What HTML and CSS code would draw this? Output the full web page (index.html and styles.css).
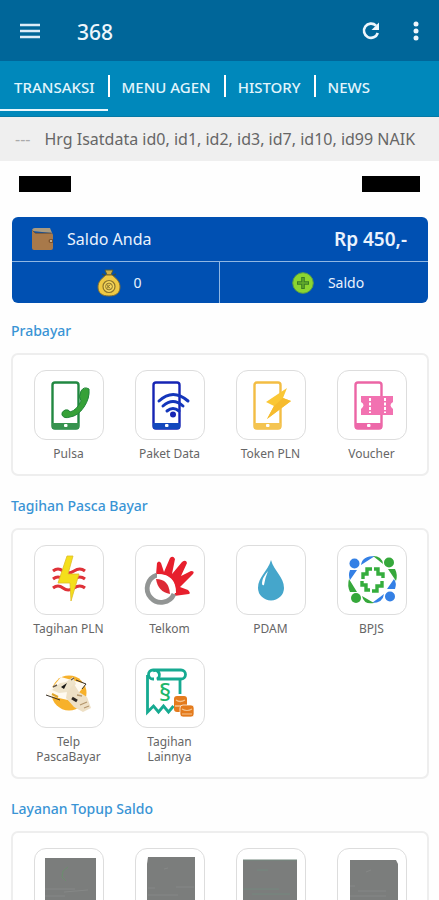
FILE: index.html
```html
<!DOCTYPE html>
<html lang="id">
<head>
  <title>368</title>
  <meta charset="UTF-8">
  <meta name="viewport" content="width=device-width, initial-scale=1.0">
  <link rel="stylesheet" href="styles.css">
</head>
<body>
  <header class="header">
    <button class="icon-btn" type="button" aria-label="Menu">
      <svg width="22" height="16" viewBox="0 0 22 16"><path d="M1 2h20M1 8h20M1 14h20" stroke="#dcecf8" stroke-width="2.4"/></svg>
    </button>
    <h1>368</h1>
    <button class="icon-btn" type="button" aria-label="Refresh">
      <svg width="20" height="20" viewBox="0 0 20 20"><path d="M15 4.600A7.100 7.100 0 1 0 16.800 12" fill="none" stroke="#eef6fc" stroke-width="2.6"/><path d="M18 1.500v7.500h-7.500z" fill="#eef6fc"/></svg>
    </button>
    <button class="icon-btn more" type="button" aria-label="More">
      <svg width="6" height="20" viewBox="0 0 6 20" fill="#eef6fc"><circle cx="3" cy="3" r="2.5"/><circle cx="3" cy="10" r="2.5"/><circle cx="3" cy="17" r="2.5"/></svg>
    </button>
  </header>
  <nav class="tabs">
    <a class="tab active" href="#transaksi">TRANSAKSI</a>
    <a class="tab" href="#menu-agen">MENU AGEN</a>
    <a class="tab" href="#history">HISTORY</a>
    <a class="tab" href="#news">NEWS</a>
  </nav>
  <div class="ticker"><span class="dashes">---</span><span>Hrg Isatdata id0, id1, id2, id3, id7, id10, id99 NAIK</span></div>
  <main class="content">
    <div class="account">
      <span class="bar"></span>
      <span class="bar bar-wide"></span>
    </div>
    <section class="balance">
      <div class="balance-top">
        <svg width="24" height="24" viewBox="0 0 24 24"><path d="M1 4q0-3 3-3h15l2 5z" fill="#a99a80"/><path d="M1 3l3 3h16q2 0 2 2v13q0 2-2 2H3q-2 0-2-2z" fill="#a8794a"/><path d="M1.500 3.500l3 2.700h16" fill="none" stroke="#69513a"/><path d="M22 12h-2.500q-2 0-2 2t2 2H22z" fill="#805630"/><circle cx="20" cy="14" r="1" fill="#ddcaa8"/></svg>
        <span class="balance-label">Saldo Anda</span>
        <strong class="amount">Rp 450,-</strong>
      </div>
      <div class="balance-actions">
        <button type="button" class="points">
          <svg width="24" height="28" viewBox="0 0 24 28"><path d="M8 1h8l-2 5h-4z" fill="#d0b047" stroke="#54613a"/><path d="M5 5l4 2h6l4-2" fill="none" stroke="#384f43" stroke-width="1.6"/><path d="M9 6h6c5 4 8 7 8 12 0 6-4 9-11 9S1 24 1 18C1 13 4 10 9 6z" fill="#efc944" stroke="#826e31"/><circle cx="12" cy="17.5" r="6" fill="#f6d75c" stroke="#8b742c" stroke-width="1.2"/><circle cx="12" cy="17.5" r="3.4" fill="none" stroke="#8b742c"/><path d="M10.800 15.500v4M13.400 15.600l-2.400 2 2.400 1.800" stroke="#8b742c" fill="none"/></svg>
          <span>0</span>
        </button>
        <button type="button" class="topup">
          <svg width="22" height="22" viewBox="0 0 22 22"><circle cx="11" cy="11" r="10.3" fill="#8bd530" stroke="#5b9f43"/><path d="M11 5v12M5 11h12" stroke="#397b25" stroke-width="3.6"/><path d="M11 6v10M6 11h10" stroke="#63ad2b" stroke-width="1.4"/></svg>
          <span>Saldo</span>
        </button>
      </div>
    </section>

    <h2>Prabayar</h2>
    <section class="card">
      <a class="item" href="#pulsa">
        <span class="tile"><svg viewBox="0 0 68 68">
          <rect x="17.5" y="11.5" width="26" height="46" rx="2.5" fill="#fff" stroke="#218841" stroke-width="2.4"/><path d="M17 52h27v4q0 2-2 2H19q-2 0-2-2z" fill="#37934f"/><rect x="29" y="53" width="3.5" height="3" rx="1" fill="#fff"/>
          <path d="M46 20q3-5 8-2 1 9-5 18T35 46q-6 2-8-2-1-3 3-5 4-1 5 2 7-2 11-11-3-4 0-10z" fill="#36a137" stroke="#218539"/>
        </svg></span>
        <span class="label">Pulsa</span>
      </a>
      <a class="item" href="#paket-data">
        <span class="tile"><svg viewBox="0 0 68 68">
          <rect x="17.5" y="11.5" width="26" height="46" rx="2.5" fill="#fff" stroke="#1624b4" stroke-width="2.4"/><path d="M17 52h27v4q0 2-2 2H19q-2 0-2-2z" fill="#1448bd"/><rect x="29" y="53" width="3.5" height="3" rx="1" fill="#fff"/>
          <g fill="none" stroke="#1436bb" stroke-width="3" stroke-linecap="round"><path d="M23 30q14-13 29 0M27 35q10-9 20 0M31 40q6-5 12 0"/></g><circle cx="37" cy="43.5" r="3" fill="#1624b4"/>
        </svg></span>
        <span class="label">Paket Data</span>
      </a>
      <a class="item" href="#token-pln">
        <span class="tile"><svg viewBox="0 0 68 68">
          <rect x="17.5" y="11.5" width="26" height="46" rx="2.5" fill="#fff" stroke="#f3bd43" stroke-width="2.4"/><path d="M17 52h27v4q0 2-2 2H19q-2 0-2-2z" fill="#f4c451"/><rect x="29" y="53" width="3.5" height="3" rx="1" fill="#fff"/>
          <path d="M50 17L29 31l8 4-7 13 24-18-8-3z" fill="#fac735"/><path d="M37 35l-7 13 24-18-8-3z" fill="#f6bb2e"/>
        </svg></span>
        <span class="label">Token PLN</span>
      </a>
      <a class="item" href="#voucher">
        <span class="tile"><svg viewBox="0 0 68 68">
          <rect x="17.5" y="11.5" width="26" height="46" rx="2.5" fill="#fff" stroke="#ec65a5" stroke-width="2.4"/><path d="M17 52h27v4q0 2-2 2H19q-2 0-2-2z" fill="#ed68a9"/><rect x="29" y="53" width="3.5" height="3" rx="1" fill="#fff"/>
          <path d="M23 25h32v6q-5 3 0 7v6H23v-6q5-4 0-7z" fill="#f272b1"/><path d="M32 27v15M47 27v15" stroke="#fff" stroke-width="2" stroke-dasharray="3 1.5"/>
        </svg></span>
        <span class="label">Voucher</span>
      </a>
    </section>

    <h2>Tagihan Pasca Bayar</h2>
    <section class="card">
      <a class="item" href="#tagihan-pln">
        <span class="tile"><svg viewBox="0 0 68 68">
          <g fill="none" stroke="#df3238" stroke-width="3"><path d="M18 25q5-4 10 0t11 0 11 0M18 33q5-4 10 0t11 0 11 0M18 42q5-4 10 0t11 0 11 0"/></g>
          <path d="M32 10h6l-5 18h11l-8 27-1-18H23z" fill="#f4df1b" stroke="#e0bd27" stroke-width=".8"/>
        </svg></span>
        <span class="label">Tagihan PLN</span>
      </a>
      <a class="item" href="#telkom">
        <span class="tile"><svg viewBox="0 0 68 68">
          <path d="M20 29l1-12q2-3 4 0l3 9 6-14q3-3 5 1l-3 15 10-12q4-3 5 1l-6 13 10-5q4 0 2 3L44 41l8 3q3 3 1 4l-15 2-6-12z" fill="#e71f2d"/>
          <circle cx="25" cy="43" r="14.5" fill="#fff"/>
          <path d="M21 29a14 14 0 1 0 17 19" fill="none" stroke="#929594" stroke-width="4.8"/>
          <path d="M21 30q16 0 17 17" fill="none" stroke="#fff" stroke-width="4.2"/>
          <path d="M20 33q13 0 14 15-12-2-14-15z" fill="#dd2935"/>
        </svg></span>
        <span class="label">Telkom</span>
      </a>
      <a class="item" href="#pdam">
        <span class="tile"><svg viewBox="0 0 68 68">
          <path d="M34 14C31 25 21 31 21 42a13 12.500 0 0 0 26 0C47 31 37 25 34 14z" fill="#45a6cb"/><path d="M31 25q-6 7-6 12 0 3 2 2 1-7 4-14z" fill="#fff"/>
        </svg></span>
        <span class="label">PDAM</span>
      </a>
      <a class="item" href="#bpjs">
        <span class="tile"><svg viewBox="0 0 68 68">
          <g fill="#3480e5"><circle cx="16.5" cy="17.5" r="5"/><path d="M23 19q1-9 14-9zM12 24h7l-7 10q-2-5 0-10zM34 57l12-9q-1 9-12 9zM57 43h-8l7-10q3 4 1 10z"/><circle cx="52" cy="50.500" r="5"/></g>
          <g fill="#36a83b"><circle cx="51" cy="16.5" r="5"/><path d="M35 10q9 0 10 8zM57 23h-7l8 12q2-6-1-12zM11 33l8 13h-7q-3-6-1-13zM24 50l12 7q-10 2-12-7z"/><circle cx="18" cy="52" r="5"/></g>
          <g fill="none" stroke="#35ad3d" stroke-width="3.4"><path d="M25 33v-5h4v-5h5M36 23h4v5h5v4M44 35v5h-5v5h-5M32 44h-4v-5h-4v-4"/></g>
        </svg></span>
        <span class="label">BPJS</span>
      </a>
      <a class="item" href="#telp-pascabayar">
        <span class="tile"><svg viewBox="0 0 68 68">
          <circle cx="34" cy="34" r="17.5" fill="#f7b12b"/>
          <path d="M11 36l15-18 25 7-14 17z" fill="#fffaf0"/><path d="M11 36l14 5M41 21l10 4-4 5" fill="none" stroke="#393027"/>
          <path d="M17 31l8-7 6-1 7-5 3 7-8 8-9 1z" fill="#efe4cb"/><path d="M26 28l6-4-3 6z" fill="#171614"/><path d="M18 28l4-2M36 21l3-2" stroke="#685b4b" stroke-width="1.5"/>
          <path d="M32 33l7-8 5 8 8 5 4 11-8 4-9-5-8-9z" fill="#eee0c5"/><path d="M37 39l5 3" stroke="#302923" stroke-width="3"/><path d="M42 36l5 1M45 46l7-3M49 49l5-2" stroke="#b4966c" stroke-width="1.3"/>
          <path d="M17 35l6 3" stroke="#e0a52a" stroke-width="2"/>
        </svg></span>
        <span class="label">Telp PascaBayar</span>
      </a>
      <a class="item" href="#tagihan-lainnya">
        <span class="tile"><svg viewBox="0 0 68 68">
          <path d="M18 20h-1a4.500 4.500 0 0 1 0-9h28a4.500 4.500 0 0 1 0 9H21a4 4 0 0 0-4-8" fill="none" stroke="#16aa91" stroke-width="2.8"/>
          <path d="M11.500 16v37l6-6 5 6 5-6 5 6 5-6" fill="none" stroke="#16aa91" stroke-width="2.8"/><path d="M44 20v15" stroke="#16aa91" stroke-width="2.8"/>
          <text x="29" y="42" text-anchor="middle" class="section-mark">§</text>
          <rect x="38" y="37" width="13" height="16" rx="3" fill="#e47b1d"/><path d="M40 41q4 3 9 0M39 47h9" fill="none" stroke="#f5c48d" stroke-width="1.3"/>
          <rect x="44" y="46" width="14" height="12" rx="3" fill="#e47b1d" stroke="#fff" stroke-width=".7"/><path d="M46 50q5 3 10 0M46 55h10" fill="none" stroke="#f5c48d" stroke-width="1.2"/>
        </svg></span>
        <span class="label">Tagihan Lainnya</span>
      </a>
    </section>

    <h2>Layanan Topup Saldo</h2>
    <section class="card">
      <a class="item" href="#topup-1" aria-label="Topup 1"><span class="tile"><svg viewBox="0 0 68 68"><path d="M10 9h51v50H10z" fill="#7b7d7c"/><path d="M33 18l-5 4-1 6 4 4" fill="none" stroke="#6c8d6e"/><path d="M10 40h30M29 43l24-2M10 47h20" stroke="#868887"/></svg></span></a>
      <a class="item" href="#topup-2" aria-label="Topup 2"><span class="tile"><svg viewBox="0 0 68 68"><path d="M12 8h47v51H11V15z" fill="#7b7d7c"/><path d="M28 20l4-1M12 39h7M40 38h18M12 46h30" stroke="#868887"/></svg></span></a>
      <a class="item" href="#topup-3" aria-label="Topup 3"><span class="tile"><svg viewBox="0 0 68 68"><path d="M6 11h54v48H6z" fill="#7b7d7c"/><path d="M6 11h54M20 21h11M6 40h36M15 45h38" stroke="#75897f"/></svg></span></a>
      <a class="item" href="#topup-4" aria-label="Topup 4"><span class="tile"><svg viewBox="0 0 68 68"><path d="M12 11h46l2 4v44H12z" fill="#7b7d7c"/><path d="M28 23l5-2M12 37h5M20 42h28M12 47h36" stroke="#868887"/></svg></span></a>
    </section>
  </main>
</body>
</html>
```
FILE: styles.css
```css
* {
  box-sizing: border-box;
}
body {
  font-family: 'Noto Sans', 'Open Sans', sans-serif;
  background: #fefefe;
  color: #666;
  margin: 0;
  height: 100vh;
  display: flex;
  flex-direction: column;
}
button {
  font: inherit;
  color: inherit;
  background: none;
  border: none;
  padding: 0;
  cursor: pointer;
}
a {
  color: inherit;
  text-decoration: none;
}
svg {
  display: block;
}
.header {
  background: #006699;
  color: #eef6fc;
  flex: none;
  height: 61px;
  padding: 0 20px 0 19px;
  display: flex;
  align-items: center;
}
.header h1 {
  margin: 2px auto 0 36px;
  font-size: 21px;
  font-weight: 500;
}
.more {
  margin-left: 32px;
}
.tabs {
  background: #0088bb;
  color: #e2f5fc;
  flex: none;
  height: 56px;
  display: flex;
  border-bottom: 1px solid #0579a5;
  font-size: 15px;
  font-weight: 500;
}
.tab {
  position: relative;
  padding: 0 13px 0 14px;
  line-height: 52px;
}
.tab + .tab::before {
  content: "";
  position: absolute;
  left: 0;
  top: 14px;
  width: 2px;
  height: 22px;
  background: #fff;
}
.tab.active::after {
  content: "";
  position: absolute;
  left: 0;
  right: 0;
  bottom: 5px;
  height: 2px;
  background: #e8f6fc;
}
.ticker {
  background: #efefef;
  flex: none;
  height: 44px;
  padding: 0 15px;
  display: flex;
  align-items: center;
  gap: 14px;
  font-size: 16px;
  white-space: nowrap;
  overflow: hidden;
}
.dashes {
  color: #aaa;
}
.content {
  flex: 1;
  min-height: 0;
  padding: 0 10px 0 11px;
  overflow-y: auto;
  scrollbar-width: none;
}
.account {
  display: flex;
  justify-content: space-between;
  padding: 15px 9px 25px 8px;
}
.bar {
  width: 52px;
  height: 16px;
  background: #000;
}
.bar-wide {
  width: 58px;
}
.balance {
  margin: 0 1px;
  border-radius: 6px;
  background: #0050b2;
  color: #eaf2fd;
}
.balance-top {
  height: 45px;
  padding: 0 21px 0 19px;
  display: flex;
  align-items: center;
  gap: 12px;
  border-bottom: 1px solid #90b7e3;
}
.balance-label {
  font-size: 16px;
}
.amount {
  margin-left: auto;
  font-size: 19px;
  font-weight: 600;
}
.balance-actions {
  height: 41px;
  display: grid;
  grid-template-columns: 1fr 1fr;
  font-size: 14px;
}
.balance-actions button {
  display: flex;
  align-items: center;
  justify-content: center;
  gap: 12px;
  padding-left: 8px;
}
.balance-actions .points {
  border-right: 1px solid #90b7e3;
}
.balance-actions .topup {
  gap: 14px;
}
h2 {
  margin: 18px 0 12px;
  color: #3994d5;
  font-size: 14px;
  line-height: 20px;
  font-weight: 500;
}
.card {
  margin-bottom: 20px;
  padding: 15px 5px 13px;
  border: 2px solid #eee;
  border-radius: 7px;
  background: #fff;
  display: grid;
  grid-template-columns: repeat(4, 1fr);
  row-gap: 22px;
}
.item {
  display: flex;
  flex-direction: column;
  align-items: center;
  gap: 6px;
}
.tile {
  width: 70px;
  height: 70px;
  border: 1px solid #ddd;
  border-radius: 12px;
}
.label {
  max-width: 76px;
  font-size: 12px;
  line-height: 15px;
  text-align: center;
}
.section-mark {
  font-size: 24px;
  font-weight: 500;
  fill: #20b66a;
}
```
